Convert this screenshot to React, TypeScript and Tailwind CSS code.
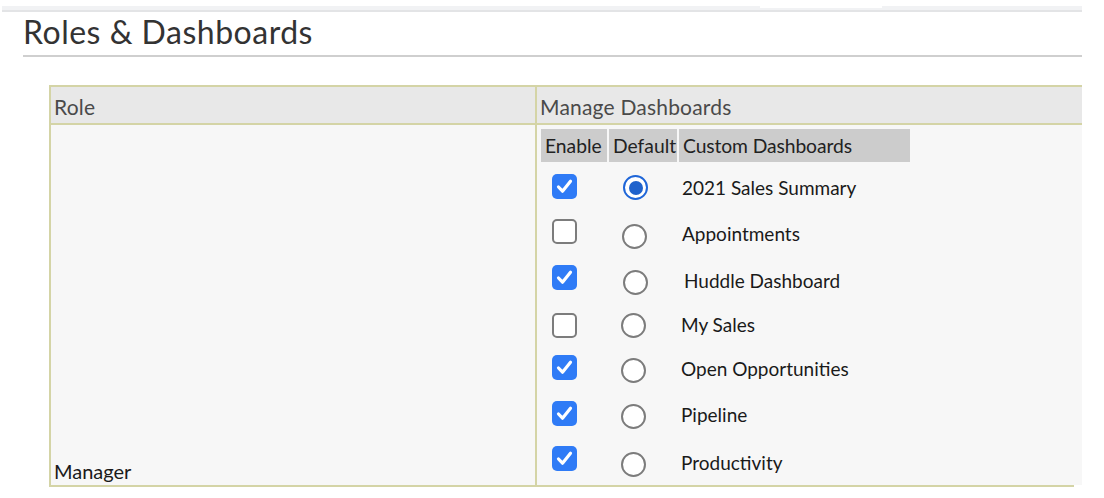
import React from "react";

type Row = {
  label: string;
  enabled: boolean;
  isDefault: boolean;
  cb: string;
  rd: string;
  rx: string;
  tx: string;
  ty: string;
};

const rows: Row[] = [
  { label: "2021 Sales Summary", enabled: true, isDefault: true, cb: "mt-0", rd: "mt-[2px]", rx: "pl-[14px]", tx: "pl-[3px]", ty: "mt-[2px]" },
  { label: "Appointments", enabled: false, isDefault: false, cb: "mt-0", rd: "mt-[9px]", rx: "pl-[13px]", tx: "pl-[3px]", ty: "mt-[4px]" },
  { label: "Huddle Dashboard", enabled: true, isDefault: false, cb: "mt-0", rd: "mt-[10px]", rx: "pl-[14px]", tx: "pl-[5px]", ty: "mt-[6px]" },
  { label: "My Sales", enabled: false, isDefault: false, cb: "mt-[5px]", rd: "mt-[5px]", rx: "pl-[12px]", tx: "pl-[2px]", ty: "mt-[3px]" },
  { label: "Open Opportunities", enabled: true, isDefault: false, cb: "mt-0", rd: "mt-[6px]", rx: "pl-[12px]", tx: "pl-[2px]", ty: "mt-[2px]" },
  { label: "Pipeline", enabled: true, isDefault: false, cb: "mt-0", rd: "mt-[6px]", rx: "pl-[12px]", tx: "pl-[2px]", ty: "mt-[2px]" },
  { label: "Productivity", enabled: true, isDefault: false, cb: "mt-0", rd: "mt-[13px]", rx: "pl-[12px]", tx: "pl-[2px]", ty: "mt-[9px]" },
];

function Checkbox({ checked }: { checked: boolean }) {
  if (checked) {
    return (
      <div className="w-[25px] h-[25px] rounded-[5px] bg-[#2f7bf6] flex items-center justify-center">
        <svg width="25" height="25" viewBox="0 0 25 25">
          <path d="M6.5 13l4 4.2 8-10" fill="none" stroke="#ffffff" strokeWidth="3.2" strokeLinecap="round" strokeLinejoin="round" />
        </svg>
      </div>
    );
  }
  return <div className="w-[25px] h-[25px] rounded-[5px] border-2 border-[#7c7c7c] bg-white" />;
}

function Radio({ checked }: { checked: boolean }) {
  if (checked) {
    return (
      <div className="w-[25px] h-[25px] rounded-full border-[2.5px] border-[#1f66d8] bg-white flex items-center justify-center">
        <div className="w-[14px] h-[14px] rounded-full bg-[#1f62cc]" />
      </div>
    );
  }
  return <div className="w-[25px] h-[25px] rounded-full border-2 border-[#7c7c7c] bg-white" />;
}

export default function App() {
  return (
    <div className="w-[1104px] h-[498px] bg-white overflow-hidden font-['Lato','Liberation_Sans',sans-serif]">
      {/* top band */}
      <div className="ml-[2px] mt-[6px] w-[1080px] h-[4px] flex">
        <div className="w-[758px] h-full bg-[#f1f2f4]" />
        <div className="w-[122px] h-full flex flex-col">
          <div className="h-[2px] bg-white" />
          <div className="h-[2px] bg-[#f1f2f4]" />
        </div>
        <div className="flex-1 h-full bg-[#f1f2f4]" />
      </div>
      <div className="ml-[2px] w-[1080px] h-[2px] bg-[#e3e4e6]" />

      {/* title */}
      <div className="mt-[2px] ml-[23px] w-[1059px] h-[43px] border-b-2 border-[#cfcfcf] text-[32px] leading-[36px] tracking-[0.5px] text-[#333333]">
        Roles &amp; Dashboards
      </div>

      {/* table */}
      <div className="mt-[28px] ml-[49px] w-[1033px] overflow-hidden">
        <div className="border-t-2 border-l-2 border-[#d4d4a6]">
          {/* header */}
          <div className="flex h-[38px] bg-[#e8e8e8] border-b-2 border-[#d4d4a6] text-[21px] leading-[24px] tracking-[0.2px] text-[#4a4a4a]">
            <div className="w-[486px] border-r-2 border-[#d4d4a6] pl-[3px] pt-[8px]">Role</div>
            <div className="flex-1 pl-[3px] pt-[8px]">Manage Dashboards</div>
          </div>
          {/* body */}
          <div className="flex h-[360px] bg-[#f7f7f7]">
            <div className="w-[486px] border-r-2 border-[#d4d4a6] flex items-end pl-[3px] pb-[2px] text-[20px] leading-[24px] text-[#1a1a1a]">
              Manager
            </div>
            <div className="flex-1 pl-[4px] pt-[4px]">
              <div className="flex gap-[2px] h-[33px] text-[19.3px] leading-[24px] text-[#222222]">
                <div className="w-[66px] bg-[#cccccc] pl-[4px] flex items-center pt-[1px]">Enable</div>
                <div className="w-[68px] bg-[#cccccc] pl-[4px] flex items-center pt-[1px]">Default</div>
                <div className="w-[231px] bg-[#cccccc] pl-[4px] flex items-center pt-[1px] tracking-[-0.1px]">Custom Dashboards</div>
              </div>
              <div className="mt-[2px] flex flex-col">
                {rows.map((r) => (
                  <div key={r.label} className="flex items-center h-[45.3px]">
                    <div className={"w-[68px] pl-[11px] " + r.cb}>
                      <Checkbox checked={r.enabled} />
                    </div>
                    <div className={"w-[70px] " + r.rx + " " + r.rd}>
                      <Radio checked={r.isDefault} />
                    </div>
                    <div className={"text-[19px] leading-[23px] text-[#1a1a1a] " + r.tx + " " + r.ty}>{r.label}</div>
                  </div>
                ))}
              </div>
            </div>
          </div>
        </div>
        <div className="w-[1025px] h-[2px] bg-[#d4d4a6]" />
      </div>
    </div>
  );
}
